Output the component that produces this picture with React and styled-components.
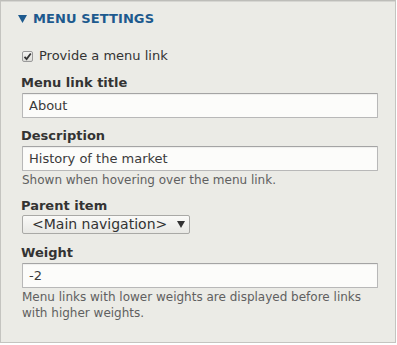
import React from "react";
import styled, { createGlobalStyle } from "styled-components";

const Global = createGlobalStyle`
  body {
    margin: 0;
    background: #fff;
    font-family: "DejaVu Sans", Verdana, sans-serif;
    font-size: 13px;
    color: #333;
  }
`;

const Panel = styled.details`
  box-sizing: border-box;
  width: 396px;
  border: 1px solid #c4c4c0;
  border-top-color: #bdbdb9;
  background: #ebebe6;
  box-shadow: inset 0 1px 0 #d6d6d2;
  padding-bottom: 21px;
`;

const Summary = styled.summary`
  display: flex;
  align-items: center;
  gap: 6px;
  padding: 9px 0 9px 17px;
  line-height: 18px;
  list-style: none;
  font-weight: bold;
  font-size: 13px;
  text-transform: uppercase;
  color: #1d5a8e;
  letter-spacing: 0.1px;
  cursor: pointer;
  &::-webkit-details-marker { display: none; }
`;

const Content = styled.div`
  display: flex;
  flex-direction: column;
  gap: 9px;
  padding: 10px 19px 0 20px;
`;

const CheckRow = styled.label`
  display: flex;
  align-items: center;
  gap: 6px;
  line-height: 18px;
`;

const CheckBox = styled.span`
  box-sizing: border-box;
  width: 11px;
  height: 11px;
  margin-left: 1px;
  border: 1px solid #9a9a9a;
  border-radius: 2px;
  background: linear-gradient(#f4f4f2, #dcdcd8);
  display: flex;
  align-items: center;
  justify-content: center;
`;

const FormItem = styled.div`
  display: flex;
  flex-direction: column;
  align-items: flex-start;
`;

const Label = styled.label`
  font-weight: bold;
  line-height: 18px;
  margin-bottom: 1px;
  color: #333;
`;

const TextInput = styled.input`
  box-sizing: border-box;
  width: 356px;
  height: 25px;
  margin: 0 0 0 1px;
  padding: 0 6px;
  border: 1px solid #b8b8b8;
  border-top-color: #a4a4a4;
  border-radius: 1px;
  background: #fcfcfa;
  box-shadow: inset 0 1px 1px rgba(0, 0, 0, 0.06);
  font: 13px "DejaVu Sans", Verdana, sans-serif;
  color: #3a3a3a;
`;

const Description = styled.div`
  margin: 1px 0 0 1px;
  font-size: 12px;
  line-height: 16px;
  color: #606060;
`;

const SelectBox = styled.div`
  box-sizing: border-box;
  display: flex;
  align-items: center;
  justify-content: space-between;
  width: 168px;
  height: 19px;
  margin: -1px 0 1px 1px;
  padding: 0 4px 0 9px;
  border: 1px solid #a9a9a6;
  border-radius: 2px;
  background: linear-gradient(#fafaf8, #e8e8e4);
  font-size: 14px;
  line-height: 17px;
  color: #333;
  white-space: nowrap;
`;

const Arrow = ({ color, w, h }) => (
  <svg width={w} height={h} viewBox="0 0 8 7">
    <polygon points="0,0 8,0 4,7" fill={color} />
  </svg>
);

const App = () => (
  <>
    <Global />
    <Panel open>
      <Summary>
        <Arrow color="#1d5a8e" w={9} h={8} />
        Menu settings
      </Summary>
      <Content>
        <CheckRow>
          <CheckBox>
            <svg width="9" height="9" viewBox="0 0 9 9">
              <path d="M1.5 4.8 L3.6 7 L7.8 1.5" stroke="#333" strokeWidth="1.8" fill="none" />
            </svg>
          </CheckBox>
          Provide a menu link
        </CheckRow>
        <FormItem>
          <Label>Menu link title</Label>
          <TextInput defaultValue="About" />
        </FormItem>
        <FormItem>
          <Label>Description</Label>
          <TextInput defaultValue="History of the market" />
          <Description>Shown when hovering over the menu link.</Description>
        </FormItem>
        <FormItem>
          <Label>Parent item</Label>
          <SelectBox>
            <span>&lt;Main navigation&gt;</span>
            <Arrow color="#333" w={8} h={7} />
          </SelectBox>
        </FormItem>
        <FormItem>
          <Label>Weight</Label>
          <TextInput defaultValue="-2" />
          <Description>
            Menu links with lower weights are displayed before links with higher weights.
          </Description>
        </FormItem>
      </Content>
    </Panel>
  </>
);

export default App;
